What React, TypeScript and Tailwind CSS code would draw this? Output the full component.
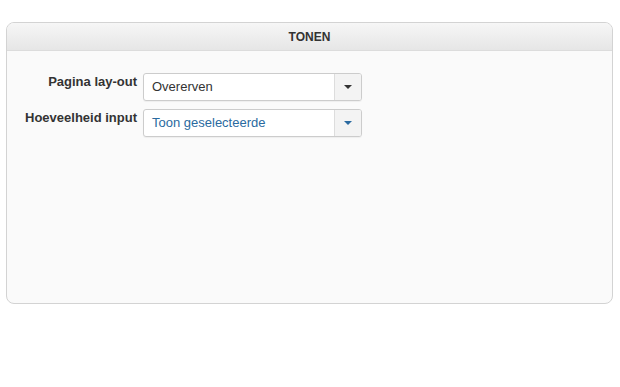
import React from "react";

function Select({ value, tone = "dark" }: { value: string; tone?: "dark" | "blue" }) {
  const blue = tone === "blue";
  return (
    <div className="flex h-[28px] w-[219px] overflow-hidden rounded-[3px] border border-[#cccccc] bg-white shadow-[0_1px_1px_rgba(0,0,0,0.05)]">
      <div className={`flex flex-1 items-center pl-[8px] text-[13px] ${blue ? "text-[#2a6aa0]" : "text-[#333333]"}`}>{value}</div>
      <div className="flex w-[27px] items-center justify-center border-l border-[#dddddd] bg-[#f3f3f3]">
        <span className={`h-0 w-0 border-x-[4px] border-t-[4px] border-x-transparent ${blue ? "border-t-[#2a6aa0]" : "border-t-[#333333]"}`} />
      </div>
    </div>
  );
}

function Row({ label, children }: { label: string; children: React.ReactNode }) {
  return (
    <div className="flex items-start">
      <div className="w-[130px] text-right text-[13px] font-bold leading-[18px] text-[#333333]">{label}</div>
      <div className="ml-[6px]">{children}</div>
    </div>
  );
}

export default function App() {
  return (
    <div className="h-[387px] w-[620px] bg-white pl-[6px] pt-[22px] font-['Liberation_Sans',Arial,sans-serif]">
      <div className="flex h-[282px] w-[607px] flex-col overflow-hidden rounded-[8px] border border-[#d3d3d3] bg-[#fafafa]">
        <div className="flex h-[28px] items-center justify-center border-b border-[#dcdcdc] bg-gradient-to-b from-[#f6f6f6] to-[#e6e6e6] text-[12px] font-bold text-[#333333]">
          TONEN
        </div>
        <div className="flex flex-col gap-[8px] pt-[22px]">
          <Row label="Pagina lay-out">
            <Select value="Overerven" />
          </Row>
          <Row label="Hoeveelheid input">
            <Select value="Toon geselecteerde" tone="blue" />
          </Row>
        </div>
      </div>
    </div>
  );
}
